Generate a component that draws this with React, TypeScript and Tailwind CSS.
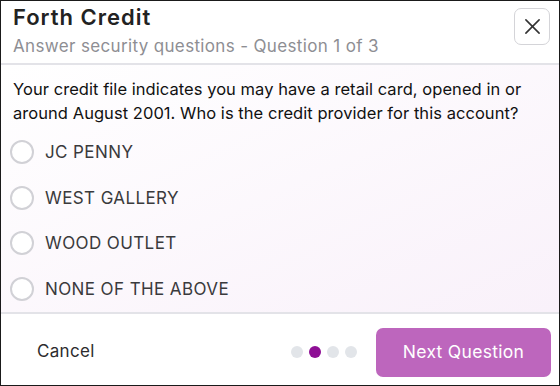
import React from 'react'

const options = ['JC PENNY', 'WEST GALLERY', 'WOOD OUTLET', 'NONE OF THE ABOVE']

export default function App() {
  const [selected, setSelected] = React.useState<number | null>(null)

  return (
    <div className="w-[560px] h-[386px] bg-white border border-[#1a1a1a] flex flex-col font-['Inter',sans-serif] text-[#1d1d1f]">
      {/* header */}
      <div className="h-[64px] shrink-0 flex items-start justify-between pl-[12px] pr-[9px] border-b-2 border-[#e3e3e8]">
        <div className="pt-[2px]">
          <h1 className="text-[22px] leading-[28px] font-semibold tracking-[1px] text-[#222]">Forth Credit</h1>
          <p className="text-[17px] leading-[24px] tracking-[0.35px] text-[#8e8e93] mt-[3px]">Answer security questions - Question 1 of 3</p>
        </div>
        <button
          type="button"
          className="mt-[7px] w-[36px] h-[37px] rounded-[7px] border border-[#d4d4d8] flex items-center justify-center text-[#333]"
        >
          <svg width="17" height="17" viewBox="0 0 18 18" fill="none" stroke="currentColor" strokeWidth="1.7" strokeLinecap="round">
            <path d="M2 2L16 16M16 2L2 16" />
          </svg>
        </button>
      </div>

      {/* body */}
      <div className="flex-1 bg-gradient-to-br from-white to-[#f9f1fa] border-b-2 border-[#e3e3e8] pl-[12px] pr-[8px] pt-[12px]">
        <p className="text-[16.5px] leading-[24px] tracking-[0.05px] text-[#111]">
          Your credit file indicates you may have a retail card, opened in or around August 2001. Who is the credit provider for this account?
        </p>
        <div className="mt-[15px] flex flex-col gap-[21.7px] -ml-[3px]">
          {options.map((opt, i) => (
            <label key={opt} className="flex items-center gap-[11px] cursor-pointer" onClick={() => setSelected(i)}>
              <span
                className={`w-[24px] h-[24px] rounded-full border-2 ${selected === i ? 'border-[#8e0f95]' : 'border-[#d1d1d6]'} bg-white`}
              />
              <span className="text-[17px] leading-[24px] text-[#3a3a3c] tracking-[0.4px]">{opt}</span>
            </label>
          ))}
        </div>
      </div>

      {/* footer */}
      <div className="h-[71px] shrink-0 flex items-center justify-between pl-[36px] pr-[8px] pt-[5px]">
        <button type="button" className="text-[17px] tracking-[0.3px] text-[#2c2c2e]">Cancel</button>
        <div className="flex items-center gap-[19px]">
          <div className="flex items-center gap-[5.5px]">
            <span className="w-[12.5px] h-[12.5px] rounded-full bg-[#e2e5e9]" />
            <span className="w-[12.5px] h-[12.5px] rounded-full bg-[#8e0f95]" />
            <span className="w-[12.5px] h-[12.5px] rounded-full bg-[#e2e5e9]" />
            <span className="w-[12.5px] h-[12.5px] rounded-full bg-[#e2e5e9]" />
          </div>
          <button type="button" className="w-[175px] h-[49px] rounded-[7px] bg-[#bd66bd] text-white text-[17.5px] tracking-[0.3px]">
            Next Question
          </button>
        </div>
      </div>
    </div>
  )
}
